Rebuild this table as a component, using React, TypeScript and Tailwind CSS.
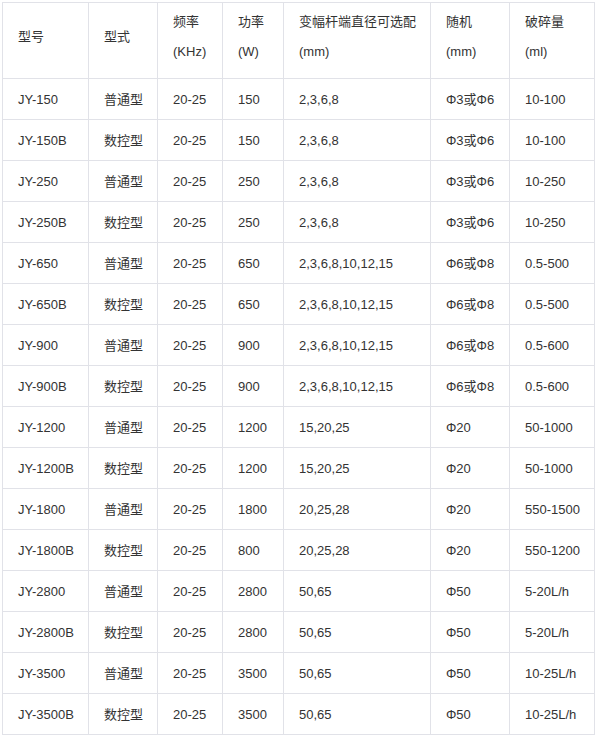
const rows: string[][] = [
  ["JY-150", "普通型", "20-25", "150", "2,3,6,8", "Φ3或Φ6", "10-100"],
  ["JY-150B", "数控型", "20-25", "150", "2,3,6,8", "Φ3或Φ6", "10-100"],
  ["JY-250", "普通型", "20-25", "250", "2,3,6,8", "Φ3或Φ6", "10-250"],
  ["JY-250B", "数控型", "20-25", "250", "2,3,6,8", "Φ3或Φ6", "10-250"],
  ["JY-650", "普通型", "20-25", "650", "2,3,6,8,10,12,15", "Φ6或Φ8", "0.5-500"],
  ["JY-650B", "数控型", "20-25", "650", "2,3,6,8,10,12,15", "Φ6或Φ8", "0.5-500"],
  ["JY-900", "普通型", "20-25", "900", "2,3,6,8,10,12,15", "Φ6或Φ8", "0.5-600"],
  ["JY-900B", "数控型", "20-25", "900", "2,3,6,8,10,12,15", "Φ6或Φ8", "0.5-600"],
  ["JY-1200", "普通型", "20-25", "1200", "15,20,25", "Φ20", "50-1000"],
  ["JY-1200B", "数控型", "20-25", "1200", "15,20,25", "Φ20", "50-1000"],
  ["JY-1800", "普通型", "20-25", "1800", "20,25,28", "Φ20", "550-1500"],
  ["JY-1800B", "数控型", "20-25", "800", "20,25,28", "Φ20", "550-1200"],
  ["JY-2800", "普通型", "20-25", "2800", "50,65", "Φ50", "5-20L/h"],
  ["JY-2800B", "数控型", "20-25", "2800", "50,65", "Φ50", "5-20L/h"],
  ["JY-3500", "普通型", "20-25", "3500", "50,65", "Φ50", "10-25L/h"],
  ["JY-3500B", "数控型", "20-25", "3500", "50,65", "Φ50", "10-25L/h"],
];

const head: [string, string?][] = [
  ["型号"],
  ["型式"],
  ["频率", "(KHz)"],
  ["功率", "(W)"],
  ["变幅杆端直径可选配", "(mm)"],
  ["随机", "(mm)"],
  ["破碎量", "(ml)"],
];

const widths = [86, 69, 65, 61, 147, 79, 85];

export default function App() {
  return (
    <div className="min-h-screen bg-white pl-[2px] pt-[2px] text-[#333] font-['Liberation_Sans','Noto_Sans_CJK_SC',sans-serif]">
      <table className="table-fixed border-collapse w-[592px] text-[13px]">
        <colgroup>
          {widths.map((w, i) => (
            <col key={i} style={{ width: w }} />
          ))}
        </colgroup>
        <thead>
          <tr className="h-[76px]">
            {head.map(([a, b], i) => (
              <td key={i} className="border border-[#e1e2e8] pl-[15px] pb-[8px] align-middle leading-[30px] font-normal text-left">
                <div>{a}</div>
                {b && <div>{b}</div>}
              </td>
            ))}
          </tr>
        </thead>
        <tbody>
          {rows.map((r, i) => (
            <tr key={i} className="h-[41px]">
              {r.map((c, j) => (
                <td key={j} className="border border-[#e1e2e8] pl-[15px] pt-[2px] align-middle whitespace-nowrap">
                  {c}
                </td>
              ))}
            </tr>
          ))}
        </tbody>
      </table>
    </div>
  );
}
